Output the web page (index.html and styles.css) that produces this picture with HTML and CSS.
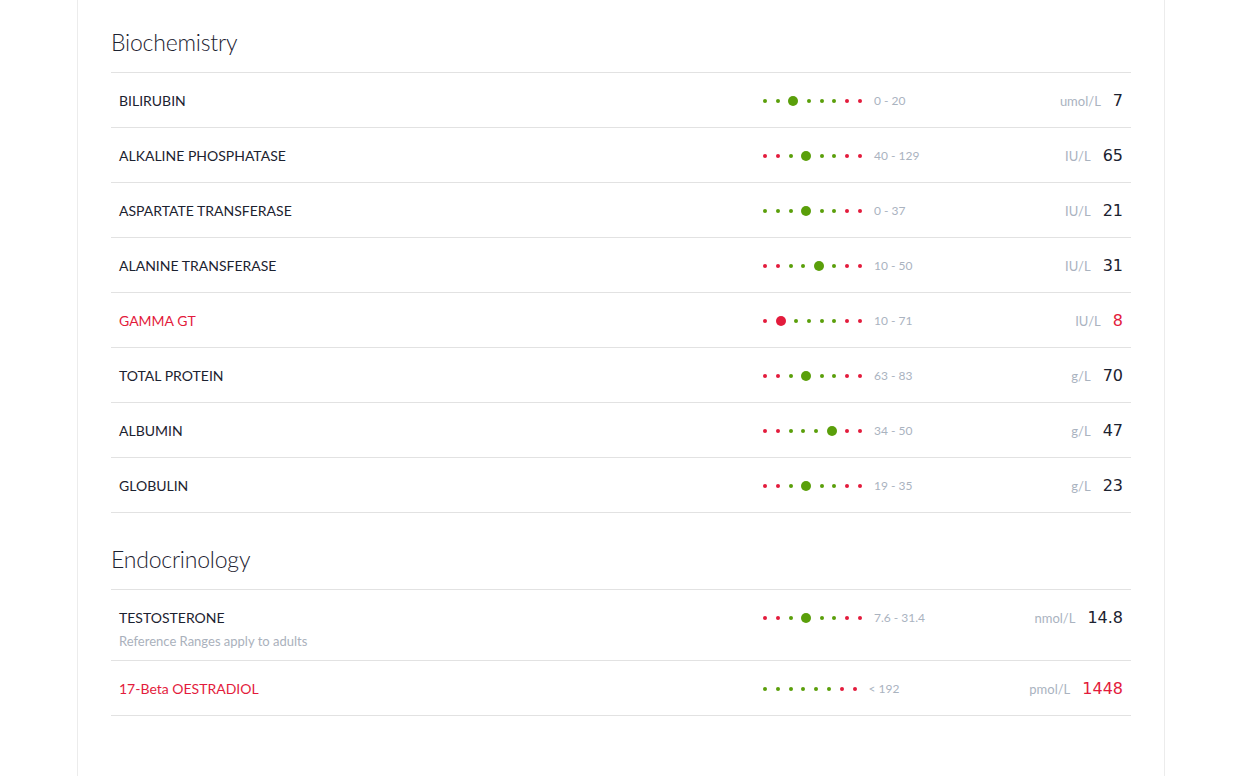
FILE: index.html
```html
<!DOCTYPE html>
<html lang="en">
<head>
    <meta charset="UTF-8">
    <title>Results</title>
    <link rel="stylesheet" href="styles.css">
</head>
<body>
    <div class="page">
        <div class="section">
            <h2 class="section-title">Biochemistry</h2>
            <div class="row">
                <div class="name">BILIRUBIN</div>
                <div class="dots"><i class="g"></i><i class="g"></i><i class="g big"></i><i class="g"></i><i class="g"></i><i class="g"></i><i class="r"></i><i class="r"></i></div>
                <div class="range">0 - 20</div>
                <div class="unit">umol/L</div>
                <div class="value">7</div>
            </div>
            <div class="row">
                <div class="name">ALKALINE PHOSPHATASE</div>
                <div class="dots"><i class="r"></i><i class="r"></i><i class="g"></i><i class="g big"></i><i class="g"></i><i class="g"></i><i class="r"></i><i class="r"></i></div>
                <div class="range">40 - 129</div>
                <div class="unit">IU/L</div>
                <div class="value">65</div>
            </div>
            <div class="row">
                <div class="name">ASPARTATE TRANSFERASE</div>
                <div class="dots"><i class="g"></i><i class="g"></i><i class="g"></i><i class="g big"></i><i class="g"></i><i class="g"></i><i class="r"></i><i class="r"></i></div>
                <div class="range">0 - 37</div>
                <div class="unit">IU/L</div>
                <div class="value">21</div>
            </div>
            <div class="row">
                <div class="name">ALANINE TRANSFERASE</div>
                <div class="dots"><i class="r"></i><i class="r"></i><i class="g"></i><i class="g"></i><i class="g big"></i><i class="g"></i><i class="r"></i><i class="r"></i></div>
                <div class="range">10 - 50</div>
                <div class="unit">IU/L</div>
                <div class="value">31</div>
            </div>
            <div class="row flag">
                <div class="name">GAMMA GT</div>
                <div class="dots"><i class="r"></i><i class="r big"></i><i class="g"></i><i class="g"></i><i class="g"></i><i class="g"></i><i class="r"></i><i class="r"></i></div>
                <div class="range">10 - 71</div>
                <div class="unit">IU/L</div>
                <div class="value">8</div>
            </div>
            <div class="row">
                <div class="name">TOTAL PROTEIN</div>
                <div class="dots"><i class="r"></i><i class="r"></i><i class="g"></i><i class="g big"></i><i class="g"></i><i class="g"></i><i class="r"></i><i class="r"></i></div>
                <div class="range">63 - 83</div>
                <div class="unit">g/L</div>
                <div class="value">70</div>
            </div>
            <div class="row">
                <div class="name">ALBUMIN</div>
                <div class="dots"><i class="r"></i><i class="r"></i><i class="g"></i><i class="g"></i><i class="g"></i><i class="g big"></i><i class="r"></i><i class="r"></i></div>
                <div class="range">34 - 50</div>
                <div class="unit">g/L</div>
                <div class="value">47</div>
            </div>
            <div class="row">
                <div class="name">GLOBULIN</div>
                <div class="dots"><i class="r"></i><i class="r"></i><i class="g"></i><i class="g big"></i><i class="g"></i><i class="g"></i><i class="r"></i><i class="r"></i></div>
                <div class="range">19 - 35</div>
                <div class="unit">g/L</div>
                <div class="value">23</div>
            </div>
        </div>

        <div class="section">
            <h2 class="section-title">Endocrinology</h2>
            <div class="row has-note">
                <div class="name">TESTOSTERONE<div class="note">Reference Ranges apply to adults</div></div>
                <div class="dots"><i class="r"></i><i class="r"></i><i class="g"></i><i class="g big"></i><i class="g"></i><i class="g"></i><i class="r"></i><i class="r"></i></div>
                <div class="range">7.6 - 31.4</div>
                <div class="unit">nmol/L</div>
                <div class="value">14.8</div>
            </div>
            <div class="row flag">
                <div class="name">17-Beta OESTRADIOL</div>
                <div class="dots"><i class="g"></i><i class="g"></i><i class="g"></i><i class="g"></i><i class="g"></i><i class="g"></i><i class="r"></i><i class="r"></i></div>
                <div class="range">&lt; 192</div>
                <div class="unit">pmol/L</div>
                <div class="value">1448</div>
            </div>
        </div>
    </div>
</body>
</html>
```

FILE: styles.css
```css
body {
    margin: 0;
    background-color: #fff;
    font-family: Lato, "Open Sans", sans-serif;
    color: #1c2230;
}
.page {
    box-sizing: border-box;
    width: 1088px;
    min-height: 100vh;
    margin-left: 77px;
    padding: 0 33px 40px;
    border-left: 1px solid #ececec;
    border-right: 1px solid #ececec;
}
.section + .section {
    margin-top: 4px;
}
.section-title {
    margin: 0;
    padding: 27px 0 15px;
    font-size: 23px;
    line-height: 30px;
    font-weight: 300;
    letter-spacing: -0.2px;
    color: #1c2230;
    border-bottom: 1px solid #e2e2e2;
}
.row {
    display: flex;
    align-items: flex-start;
    padding: 18px 8px 16px;
    border-bottom: 1px solid #e2e2e2;
}
.row.has-note {
    padding-bottom: 11px;
}
.name {
    flex: 0 0 644px;
    font-size: 14px;
    line-height: 20px;
}
.note {
    margin-top: 5px;
    font-size: 13px;
    line-height: 16px;
    color: #aab1bc;
}
.dots {
    display: flex;
    align-items: center;
    gap: 8.8px;
    height: 20px;
}
.dots i {
    display: block;
    width: 4px;
    height: 4px;
    border-radius: 50%;
}
.dots i.big {
    width: 10px;
    height: 10px;
    margin: 0 -0.3px;
}
.dots .g { background-color: #5a9f0a; }
.dots .r { background-color: #e31b3c; }
.range {
    flex: 1;
    margin-left: 12px;
    font-size: 12px;
    line-height: 20px;
    color: #aab3bf;
}
.unit {
    margin-right: 12px;
    font-size: 13px;
    line-height: 20px;
    color: #aab3bf;
}
.value {
    font-family: "DejaVu Sans", sans-serif;
    font-size: 16px;
    line-height: 20px;
    color: #1c2230;
}
.flag .name,
.flag .value {
    color: #e31b3c;
}
```
